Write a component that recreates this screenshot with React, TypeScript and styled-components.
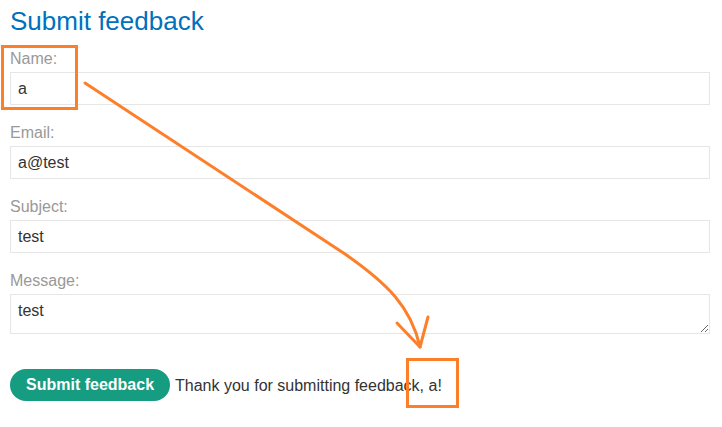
import styled, { createGlobalStyle } from 'styled-components';

const GlobalStyle = createGlobalStyle`
  body {
    margin: 0;
    background: #ffffff;
    font-family: 'Liberation Sans', Arial, sans-serif;
  }
`;

const Page = styled.div`
  position: relative;
  width: 722px;
  height: 427px;
  padding: 6px 12px 0 10px;
  box-sizing: border-box;
  overflow: hidden;
`;

const Title = styled.h1`
  margin: 0 0 13px;
  font-size: 26px;
  line-height: 30px;
  font-weight: normal;
  color: #0071bc;
`;

const Form = styled.form`
  display: flex;
  flex-direction: column;
`;

const Field = styled.div`
  display: flex;
  flex-direction: column;
  margin-bottom: 18px;
`;

const Label = styled.label`
  font-size: 16px;
  line-height: 20px;
  color: #999999;
  margin-bottom: 3px;
`;

const Input = styled.input`
  box-sizing: border-box;
  width: 700px;
  height: 33px;
  margin: 0;
  padding: 0 7px;
  border: 1px solid #e6e6e6;
  font-family: 'Liberation Sans', Arial, sans-serif;
  font-size: 16px;
  color: #333333;
  outline: none;
`;

const TextArea = styled.textarea`
  box-sizing: border-box;
  width: 700px;
  height: 40px;
  margin: 0;
  padding: 7px 7px 3px;
  border: 1px solid #e6e6e6;
  font-family: 'Liberation Sans', Arial, sans-serif;
  font-size: 16px;
  color: #333333;
  outline: none;
`;

const Actions = styled.div`
  display: flex;
  align-items: center;
  gap: 5px;
  margin-top: 17px;
`;

const Button = styled.button`
  height: 32px;
  padding: 0 16px;
  border: none;
  border-radius: 16px;
  background: #169c81;
  color: #ffffff;
  font-family: 'Liberation Sans', Arial, sans-serif;
  font-size: 16px;
  font-weight: bold;
  cursor: pointer;
`;

const Message = styled.span`
  font-size: 16px;
  color: #333333;
  padding-top: 2px;
`;

const Overlay = styled.svg`
  position: absolute;
  left: 0;
  top: 0;
  pointer-events: none;
`;

const fields = [
  { label: 'Name:', value: 'a' },
  { label: 'Email:', value: 'a@test' },
  { label: 'Subject:', value: 'test' },
];

export default function App() {
  return (
    <Page>
      <GlobalStyle />
      <Title>Submit feedback</Title>
      <Form onSubmit={(e) => e.preventDefault()}>
        {fields.map((f) => (
          <Field key={f.label}>
            <Label>{f.label}</Label>
            <Input defaultValue={f.value} />
          </Field>
        ))}
        <Field>
          <Label>Message:</Label>
          <TextArea defaultValue="test" />
        </Field>
        <Actions>
          <Button type="submit">Submit feedback</Button>
          <Message>Thank you for submitting feedback, a!</Message>
        </Actions>
      </Form>
      <Overlay width="722" height="427" viewBox="0 0 722 427">
        <g fill="none" stroke="#fd7f2a" strokeWidth="3">
          <rect x="2.5" y="46.5" width="74" height="62" />
          <rect x="407.5" y="359.5" width="50" height="47" />
          <path d="M85 83 L345 254 C388 284 411 307 420 347" strokeLinecap="round" />
          <path d="M397 323 L420 347 L428 317" strokeLinecap="round" strokeLinejoin="round" />
        </g>
      </Overlay>
    </Page>
  );
}
